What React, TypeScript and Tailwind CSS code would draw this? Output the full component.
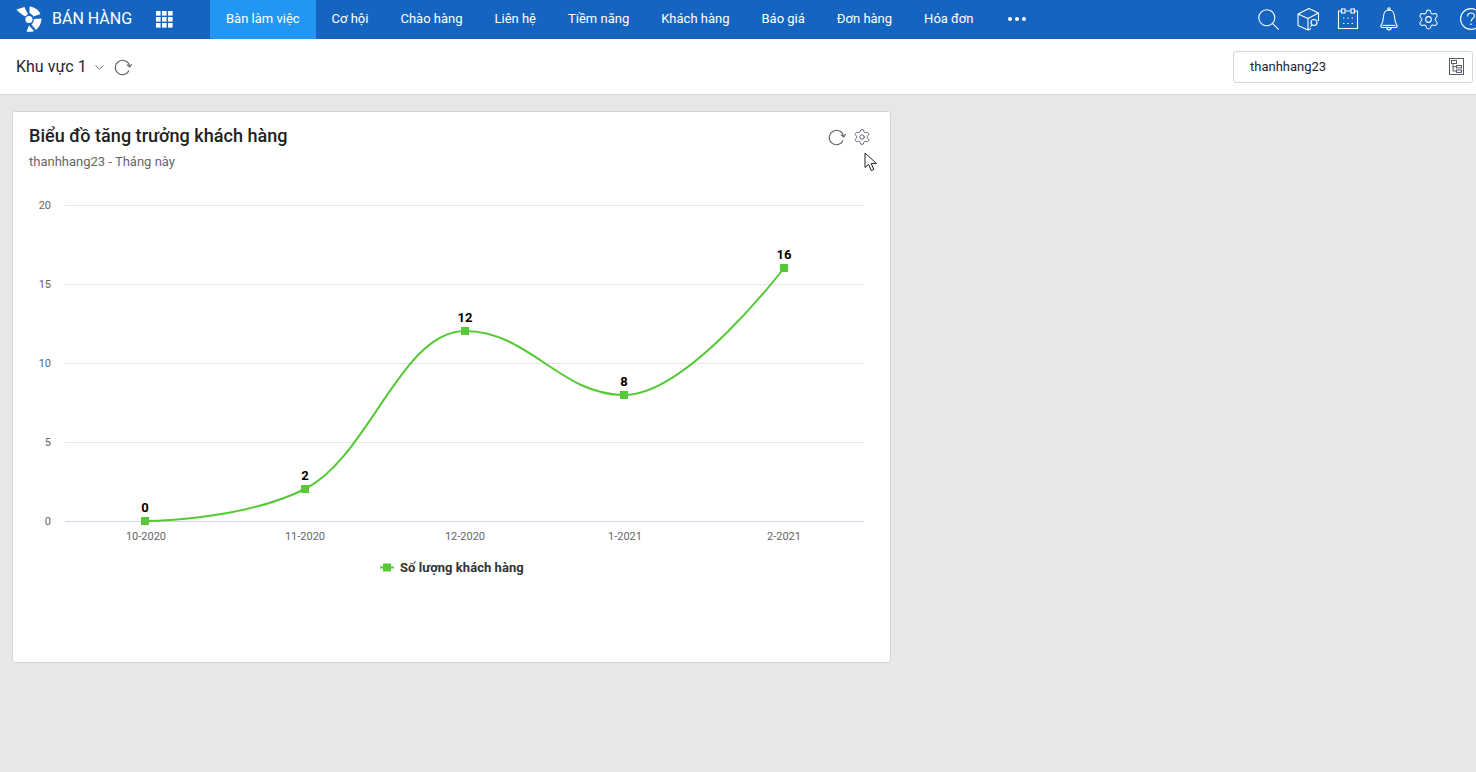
import { ChevronDown, Settings } from 'lucide-react'

const navItems = ['Cơ hội', 'Chào hàng', 'Liên hệ', 'Tiềm năng', 'Khách hàng', 'Báo giá', 'Đơn hàng', 'Hóa đơn']

const yTicks = [
  { label: '20', y: 205 },
  { label: '15', y: 284 },
  { label: '10', y: 363 },
  { label: '5', y: 442 },
]

const points = [
  { x: 145, y: 521, value: '0', month: '10-2020', labelX: 146 },
  { x: 305, y: 489, value: '2', month: '11-2020', labelX: 305 },
  { x: 465, y: 331, value: '12', month: '12-2020', labelX: 465 },
  { x: 624, y: 395, value: '8', month: '1-2021', labelX: 625 },
  { x: 784, y: 268, value: '16', month: '2-2021', labelX: 784 },
]

const CURVE = 'M145 521 C145 521 241 521 305 489 C369 457 401 331 465 331 C529 331 560 395 624 395 C688 395 784 268 784 268'

function Logo() {
  return (
    <svg width="26" height="26" viewBox="0 0 26 26" fill="white">
      <path d="M0.5 3.5 L8.5 1 C9.5 3.5 10.5 5.5 12 8 L9.5 10.5 C6.5 9 3 6.5 0.5 3.5Z" />
      <path d="M13.5 0.5 C18 1 22.5 3.5 24.5 8 L17.5 10.5 C16.5 9 15.5 8 13.5 7Z" />
      <circle cx="13" cy="13.5" r="3.6" />
      <path d="M18 13 L25.5 12.5 C25.5 17 23.5 21 20 24 L15.5 18.5 C17 17.2 17.8 15.2 18 13Z" />
      <path d="M13 19.5 L18 25 C16 26 13 26 10.5 25.5Z" />
    </svg>
  )
}

function AppsGrid() {
  return (
    <svg width="17" height="17" viewBox="0 0 17 17" fill="white">
      {[0, 6, 12].map((y) =>
        [0, 6, 12].map((x) => <rect key={`${x}-${y}`} x={x} y={y} width="4.6" height="4.6" />),
      )}
    </svg>
  )
}

function RefreshIcon() {
  return (
    <svg width="18" height="18" viewBox="0 0 18 18" fill="none" stroke="#5f6570" strokeWidth="1.1">
      <path d="M15 12.6 A7.2 7.2 0 1 1 15.6 8.4" />
      <path d="M12.8 6.6 L15.7 9 L17.8 6" />
    </svg>
  )
}

function SearchIcon() {
  return (
    <svg width="21" height="21" viewBox="0 0 21 21" fill="none" stroke="white" strokeWidth="1.1">
      <circle cx="8.8" cy="8.8" r="8" />
      <path d="M14.6 14.6 L20.8 20.6" />
    </svg>
  )
}

function BoxIcon() {
  return (
    <svg width="24" height="24" viewBox="0 0 24 24" fill="none" stroke="white" strokeWidth="1.1" strokeLinejoin="round">
      <path d="M2 7 L13 1.5 L22.5 6 L22.5 14 M2 7 L2 18.5 L12 23 L15 21.5 M2 7 L12 11.5 L22.5 6 M12 11.5 L12 23" />
      <circle cx="18" cy="15.5" r="3" />
      <path d="M15.8 18 L14.4 20" />
    </svg>
  )
}

function CalendarIcon() {
  return (
    <svg width="22" height="22" viewBox="0 0 22 22" fill="none" stroke="white" strokeWidth="1.1">
      <path d="M4 3 L1.5 3 L1.5 20.5 L20.5 20.5 L20.5 3 L18 3 M8.5 3 L13.5 3" />
      <rect x="4.5" y="1" width="3.5" height="4" />
      <rect x="14" y="1" width="3.5" height="4" />
      <path d="M6 10 h1.4 M10.3 10 h1.4 M14.6 10 h1.4 M6 15.5 h1.4 M10.3 15.5 h1.4 M14.6 15.5 h1.4" strokeWidth="1.2" />
    </svg>
  )
}

function BellIcon() {
  return (
    <svg width="18" height="24" viewBox="0 0 18 24" fill="none" stroke="white" strokeWidth="1.1">
      <path d="M9 3 C4 3 3.6 7 3.4 10.5 C3.2 14.5 2.2 16.5 1 18.5 C0.5 19.6 1 20.5 2.5 20.5 L15.5 20.5 C17 20.5 17.5 19.6 17 18.5 C15.8 16.5 14.8 14.5 14.6 10.5 C14.4 7 14 3 9 3Z" />
      <path d="M2.6 18.4 L15.4 18.4" />
      <circle cx="9" cy="2" r="1.2" />
      <path d="M6.8 20.5 C6.8 23.6 11.2 23.6 11.2 20.5" />
    </svg>
  )
}

function HelpIcon() {
  return (
    <svg width="22" height="22" viewBox="0 0 22 22" fill="none" stroke="white" strokeWidth="1.1" className="shrink-0">
      <circle cx="11" cy="11" r="10.4" />
      <path d="M7.6 8.4 C7.6 6.2 9.2 5 11 5 C13 5 14.4 6.3 14.4 8 C14.4 10.4 11 10.6 11 13.6" />
      <path d="M11 15.6 V17" strokeWidth="1.3" />
    </svg>
  )
}

function TreeIcon() {
  return (
    <svg width="15" height="17" viewBox="0 0 15 17" fill="none" stroke="#555b66" strokeWidth="1">
      <rect x="0.5" y="0.5" width="14" height="16" />
      <rect x="2.5" y="2.5" width="5" height="3" />
      <rect x="7.5" y="7.5" width="5" height="2.4" />
      <rect x="7.5" y="12" width="5" height="2.4" />
      <path d="M4 5.5 V13 H7.5 M4 8.7 H7.5" />
    </svg>
  )
}

function CursorIcon() {
  return (
    <svg width="14" height="20" viewBox="0 0 14 20" className="absolute left-[851px] top-[40px]">
      <path d="M1 1 L1 15.5 L4.6 12.4 L7.2 18.6 L9.8 17.4 L7.2 11.6 L12.4 11.4 Z" fill="white" stroke="#222" strokeWidth="1" strokeLinejoin="miter" />
    </svg>
  )
}

function GrowthChart() {
  return (
    <svg width="876" height="400" viewBox="13 190 876 400" className="block">
      {yTicks.map((t) => (
        <g key={t.label}>
          <line x1="65" x2="864" y1={t.y + 0.5} y2={t.y + 0.5} stroke="#e6e6e6" />
          <text x="51" y={t.y + 4} textAnchor="end" className="fill-[#666666] text-[11px]">
            {t.label}
          </text>
        </g>
      ))}
      <line x1="65" x2="864" y1="521.5" y2="521.5" stroke="#ccd6eb" />
      <text x="51" y="525" textAnchor="end" className="fill-[#666666] text-[11px]">
        0
      </text>
      <path d={CURVE} fill="none" stroke="#55c936" strokeWidth="2" />
      {points.map((p) => (
        <g key={p.month}>
          <rect x={p.x - 4} y={p.y - 4} width="8" height="8" fill="#55c936" />
          <text x={p.x} y={p.y - 9} textAnchor="middle" className="fill-black text-[13px] font-bold">
            {p.value}
          </text>
          <text x={p.labelX} y="540" textAnchor="middle" className="fill-[#666666] text-[11px]">
            {p.month}
          </text>
        </g>
      ))}
      <line x1="380" x2="394" y1="567.5" y2="567.5" stroke="#55c936" strokeWidth="2" />
      <rect x="383" y="563.5" width="8" height="8" fill="#55c936" />
      <text x="400" y="572" className="fill-[#333333] text-[13px] font-bold tracking-[0.05px]">
        Số lượng khách hàng
      </text>
    </svg>
  )
}

export default function App() {
  return (
    <div className="flex h-screen flex-col overflow-hidden bg-[#e7e7e7] font-['Roboto',sans-serif]">
      <header className="flex h-[39px] shrink-0 items-center bg-[#1565c0] pb-px text-white">
        <div className="ml-[16px] flex w-[194px] items-center">
          <Logo />
          <span className="ml-[10px] text-base leading-none">BÁN HÀNG</span>
          <span className="ml-[24px] flex">
            <AppsGrid />
          </span>
        </div>
        <nav className="flex h-full items-center text-[13px]">
          <a className="-mb-px flex h-[39px] items-center bg-[#2196f3] px-4 pb-px">Bàn làm việc</a>
          {navItems.map((item) => (
            <a key={item} className="flex h-full items-center px-4">
              {item}
            </a>
          ))}
          <span className="ml-[19px] flex gap-[3px]">
            <i className="size-[4px] rounded-full bg-white" />
            <i className="size-[4px] rounded-full bg-white" />
            <i className="size-[4px] rounded-full bg-white" />
          </span>
        </nav>
        <div className="ml-auto flex items-center">
          <SearchIcon />
          <span className="ml-[17px] flex">
            <BoxIcon />
          </span>
          <span className="ml-[17px] flex">
            <CalendarIcon />
          </span>
          <span className="ml-[21px] flex">
            <BellIcon />
          </span>
          <Settings size={23} strokeWidth={1.05} className="ml-[19px]" />
          <span className="-mr-[6px] ml-[20px] flex">
            <HelpIcon />
          </span>
        </div>
      </header>

      <div className="flex h-[56px] shrink-0 items-center border-b border-[#d9d9d9] bg-white pl-4 pr-[3px]">
        <span className="text-base text-[#1f2430]">Khu vực 1</span>
        <ChevronDown size={15} strokeWidth={1.4} className="ml-[5px] mt-[2px] text-[#555b66]" />
        <span className="ml-[7px] flex">
          <RefreshIcon />
        </span>
        <div className="ml-auto flex h-[32px] w-[240px] items-center justify-between rounded-[3px] border border-[#d5d5da] pl-4 pr-[8px] text-[13px] text-[#1f2430]">
          thanhhang23
          <TreeIcon />
        </div>
      </div>

      <main className="flex-1 pl-3 pt-4">
        <section className="relative h-[552px] w-[879px] rounded-[3px] border border-[#d5d5d8] bg-white">
          <div className="flex items-start justify-between pl-4 pr-[19px] pt-[12px]">
            <div>
              <h1 className="text-lg leading-[24px] font-medium tracking-[0.03px] text-[#212121]">Biểu đồ tăng trưởng khách hàng</h1>
              <p className="mt-[5px] text-[13px] leading-[18px] text-[#666666]">thanhhang23 - Tháng này</p>
            </div>
            <div className="mt-[4px] flex items-center gap-[7px]">
              <RefreshIcon />
              <Settings size={18} strokeWidth={1.2} className="text-[#555b66]" />
            </div>
          </div>
          <CursorIcon />
          <div className="mt-[19px]">
            <GrowthChart />
          </div>
        </section>
      </main>
    </div>
  )
}
